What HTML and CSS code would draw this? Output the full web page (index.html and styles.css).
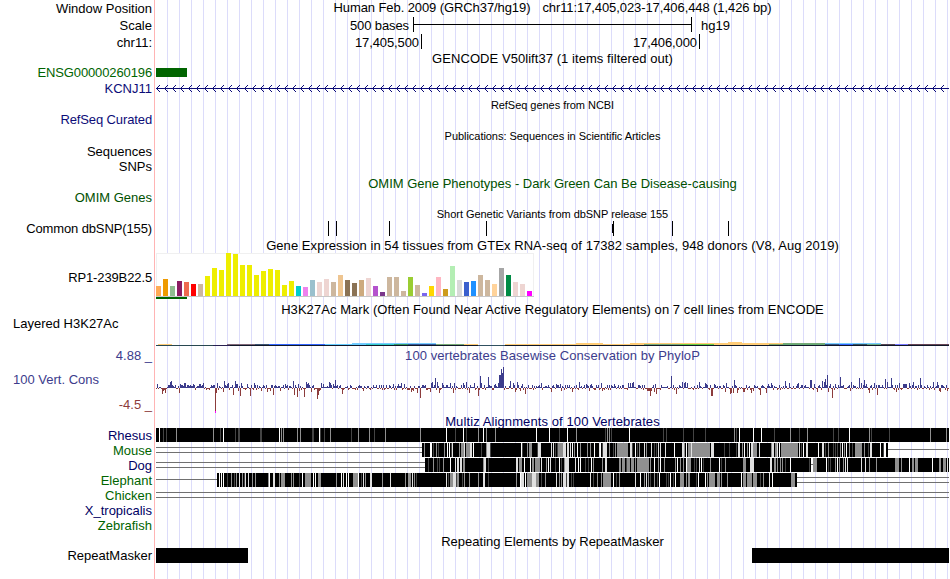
FILE: index.html
```html
<!DOCTYPE html>
<html lang="en">
<head>
    <meta charset="UTF-8">
    <meta name="viewport" content="width=device-width, initial-scale=1.0">
    <title>Human chr11:17,405,023-17,406,448</title>
    <link rel="stylesheet" href="styles.css">
</head>
<body>

    <main class="browser">
        <!-- Position and ruler -->
        <div class="row h17">
            <span class="label">Window Position</span>
            <div class="caption position"><span>Human Feb. 2009 (GRCh37/hg19)</span><span>chr11:17,405,023-17,406,448 (1,426 bp)</span></div>
        </div>
        <div class="row h17">
            <span class="label">Scale</span>
            <div class="scale">
                <span class="scale-size">500 bases</span>
                <span class="scale-bar"></span>
                <span class="scale-db">hg19</span>
            </div>
        </div>
        <div class="row h17">
            <span class="label">chr11:</span>
            <div class="ruler">
                <span class="ruler-mark first">17,405,500</span>
                <span class="ruler-mark">17,406,000</span>
            </div>
        </div>

        <!-- Genes -->
        <div class="row h15"><div class="caption wide">GENCODE V50lift37 (1 items filtered out)</div></div>
        <div class="row h14">
            <span class="label green tight">ENSG00000260196</span>
            <svg class="data" id="ensg" width="793" height="14"><rect x="0" y="2" width="31" height="9" fill="#006400"/></svg>
        </div>
        <div class="row h17">
            <span class="label navy">KCNJ11</span>
            <svg class="data" id="kcnj11" width="793" height="17"></svg>
        </div>
        <div class="row h15"><div class="caption small low">RefSeq genes from NCBI</div></div>
        <div class="row h15"><span class="label navy tight">RefSeq Curated</span></div>
        <div class="row h17"><div class="caption small low">Publications: Sequences in Scientific Articles</div></div>
        <div class="row h15"><span class="label">Sequences</span></div>
        <div class="row h16"><span class="label">SNPs</span></div>
        <div class="row h16"><div class="caption low omim">OMIM Gene Phenotypes - Dark Green Can Be Disease-causing</div></div>
        <div class="row h14"><span class="label omim">OMIM Genes</span></div>

        <!-- Variants -->
        <div class="row h16"><div class="caption small low">Short Genetic Variants from dbSNP release 155</div></div>
        <div class="row h16">
            <span class="label tight">Common dbSNP(155)</span>
            <svg class="data" id="snps" width="793" height="16"></svg>
        </div>

        <!-- Expression -->
        <div class="row h16"><div class="caption low wide">Gene Expression in 54 tissues from GTEx RNA-seq of 17382 samples, 948 donors (V8, Aug 2019)</div></div>
        <div class="row gtex-row">
            <span class="label tight">RP1-239B22.5</span>
            <svg class="data" id="gtex" width="793" height="48"></svg>
        </div>

        <!-- Regulation -->
        <div class="row h16"><div class="caption low wide">H3K27Ac Mark (Often Found Near Active Regulatory Elements) on 7 cell lines from ENCODE</div></div>
        <div class="row layered-row">
            <span class="label left">Layered H3K27Ac</span>
            <svg class="data" id="layered" width="793" height="31"></svg>
        </div>

        <!-- Conservation -->
        <div class="row h15">
            <span class="label cons">4.88 _</span>
            <div class="caption cons wide">100 vertebrates Basewise Conservation by PhyloP</div>
        </div>
        <div class="row cons-row">
            <div class="cons-labels">
                <span class="label left cons">100 Vert. Cons</span>
                <span class="label cons-min">-4.5 _</span>
            </div>
            <svg class="data" id="phylop" width="793" height="50"></svg>
        </div>
        <div class="row h15"><div class="caption low wider multiz">Multiz Alignments of 100 Vertebrates</div></div>
        <div class="row h15"><span class="label multiz">Rhesus</span><svg class="data" id="rhesus" width="793" height="15"></svg></div>
        <div class="row h15"><span class="label green">Mouse</span><svg class="data" id="mouse" width="793" height="15"></svg></div>
        <div class="row h15"><span class="label multiz">Dog</span><svg class="data" id="dog" width="793" height="15"></svg></div>
        <div class="row h15"><span class="label green">Elephant</span><svg class="data" id="elephant" width="793" height="15"></svg></div>
        <div class="row h15"><span class="label green">Chicken</span><svg class="data" id="chicken" width="793" height="15"></svg></div>
        <div class="row h15"><span class="label multiz">X_tropicalis</span></div>
        <div class="row h15"><span class="label green">Zebrafish</span></div>

        <!-- Repeats -->
        <div class="row h15"><div class="caption low">Repeating Elements by RepeatMasker</div></div>
        <div class="row h15">
            <span class="label">RepeatMasker</span>
            <svg class="data" id="repeats" width="793" height="15"><rect width="92" height="15"/><rect x="596" width="197" height="15"/></svg>
        </div>
    </main>

    <script src="tracks.js"></script>
</body>
</html>
```

FILE: styles.css
```css
body {
    margin: 0;
    background: #fff;
    font-family: "Liberation Sans", Arial, Helvetica, sans-serif;
    font-size: 13px;
    color: #000;
}

/* Guide lines every 12px, red line between labels and data */
.browser {
    width: 949px;
    height: 579px;
    overflow: hidden;
    background:
        linear-gradient(#ffb4b4, #ffb4b4) 154px 0 / 1px 100% no-repeat,
        repeating-linear-gradient(to right, #dcdcfa 0, #dcdcfa 1px, transparent 1px, transparent 12px) 167px 0 / 782px 100% no-repeat;
}

.row {
    display: grid;
    grid-template-columns: 152px 793px;
    column-gap: 4px;
    white-space: nowrap;
}

.h14 { height: 14px; line-height: 14px; }
.h15 { height: 15px; line-height: 15px; }
.h16 { height: 16px; line-height: 16px; }
.h17 { height: 17px; line-height: 17px; }

.label {
    text-align: right;
}

.label.left {
    text-align: left;
    padding-left: 13px;
}

.caption {
    grid-column: 2;
    text-align: center;
}

.small {
    font-size: 11px;
    letter-spacing: -0.04px;
}

.low {
    padding-top: 1px;
}

.tight { letter-spacing: -0.12px; }
.wide { letter-spacing: 0.06px; }
.wider { letter-spacing: 0.1px; }

.position {
    display: flex;
    justify-content: center;
    gap: 12px;
    line-height: 15px;
    letter-spacing: -0.09px;
}

.data {
    display: block;
    grid-column: 2;
    overflow: visible;
    shape-rendering: crispEdges;
}

/* Track colors */
.green { color: #006400; }
.navy { color: #0c0c78; }
.omim { color: #005000; }
.cons { color: #3c3c8c; }
.cons-min { color: #8c3c3c; }
.multiz { color: #000064; }

/* Scale bar */
.scale {
    display: flex;
    align-items: center;
}

.scale-size {
    width: 253px;
    text-align: right;
    margin-right: 4px;
    letter-spacing: -0.1px;
}

.scale-bar {
    width: 277px;
    height: 15px;
    margin-right: 9px;
    border-left: 1px solid #000;
    border-right: 1px solid #000;
    background: linear-gradient(#000, #000) 0 7px / 100% 1px no-repeat;
    margin-bottom: 2px;
}

/* Ruler */
.ruler {
    display: flex;
    align-items: flex-start;
}

.ruler-mark {
    width: 275px;
    height: 15px;
    padding-right: 2px;
    border-right: 1px solid #000;
    text-align: right;
    line-height: 17px;
    letter-spacing: -0.1px;
}

.ruler-mark.first {
    width: 263px;
}

.gtex-row {
    height: 48px;
    line-height: 49px;
}

.layered-row {
    height: 31px;
    line-height: 14px;
}

/* Conservation */
.cons-row {
    height: 50px;
    line-height: 15px;
}

.cons-labels {
    display: flex;
    flex-direction: column;
    gap: 10px;
    padding-top: 9px;
}
```

FILE: tracks.js
```js
const SVG_NS = "http://www.w3.org/2000/svg";
const LEFT = 156; // x of the first data pixel
const RIGHT = 949;

function rect(svg, x, y, w, h, fill) {
    const r = document.createElementNS(SVG_NS, "rect");
    r.setAttribute("x", x);
    r.setAttribute("y", y);
    r.setAttribute("width", w);
    r.setAttribute("height", h);
    r.setAttribute("fill", fill);
    svg.appendChild(r);
}

function makeRandom(seed) {
    return () => {
        seed = (seed * 1103515245 + 12345) % 2147483648;
        return seed / 2147483648;
    };
}

// "x:height x:height" to an object
function parsePairs(text) {
    const out = {};
    text.trim().split(/\s+/).forEach((p) => {
        const [x, h] = p.split(":").map(Number);
        out[x] = h;
    });
    return out;
}

// KCNJ11 intron line with strand arrows
const gene = document.getElementById("kcnj11");
rect(gene, 0, 8, 793, 1, "#0c0c78");
for (let x = 0; x < 790; x += 8) {
    for (let i = 1; i < 4; i++) {
        rect(gene, x + i, 8 - i, 1, 1, "#0c0c78");
        rect(gene, x + i, 8 + i, 1, 1, "#0c0c78");
    }
}

// Common SNPs
const snps = document.getElementById("snps");
[328, 336, 389, 486, 613, 672, 728].forEach((x) => rect(snps, x - LEFT, 0, 1, 15, "#000"));
rect(snps, 612 - LEFT, 3, 1, 9, "#000");

// GTEx bars: height, color
const tissues = [
    [10, "#ffaa55"], [17, "#ee9a00"], [10, "#8fbc8f"], [15, "#8b1c62"], [14, "#ee6a50"], [12, "#ff0000"],
    [12, "#cdb79e"], [20, "#eeee00"], [28, "#eeee00"], [26, "#eeee00"], [43, "#eeee00"], [42, "#eeee00"],
    [31, "#eeee00"], [31, "#eeee00"], [21, "#eeee00"], [25, "#eeee00"], [27, "#eeee00"], [26, "#eeee00"],
    [11, "#eeee00"], [15, "#eeee00"], [10, "#00cdcd"], [9, "#ee82ee"], [16, "#9ac0cd"], [14, "#eed5d2"],
    [17, "#eed5d2"], [14, "#cdb79e"], [21, "#eec591"], [16, "#8b7355"], [13, "#8b7355"], [16, "#cdaa7d"],
    [18, "#eed5d2"], [10, "#b452cd"], [4, "#7a378b"], [19, "#cdb79e"], [19, "#cdb79e"], [5, "#cdb79e"],
    [19, "#9acd32"], [11, "#cdb79e"], [3, "#7a67ee"], [10, "#ffd700"], [19, "#ffb6c1"], [7, "#cd9b1d"],
    [30, "#b4eeb4"], [16, "#d9d9d9"], [14, "#3a5fcd"], [15, "#1e90ff"], [21, "#cdb79e"], [16, "#cdb79e"],
    [12, "#ffd39b"], [28, "#a6a6a6"], [21, "#008b45"], [14, "#eed5d2"], [12, "#eed5d2"], [5, "#ff00ff"]
];
const gtex = document.getElementById("gtex");
rect(gtex, 0, 0, 378, 44, "#f0f0f0");
rect(gtex, 1, 1, 376, 42, "#fff");
rect(gtex, 0, 43, 378, 1, "#c8c8c8");
tissues.forEach(([h, color], i) => rect(gtex, i * 7, 43 - h, 5, h, color));
rect(gtex, 0, 44, 31, 2, "#006400");

// Layered H3K27Ac: x from, x to, y, color
const layered = document.getElementById("layered");
rect(layered, 0, 28, 793, 1, "#101828");
[
    [156, 213, 28, "#284850"], [213, 230, 28, "#282050"], [478, 505, 28, "#305060"],
    [158, 172, 27, "#ffcc77"], [227, 255, 27, "#806878"], [255, 269, 27, "#3d5472"],
    [269, 325, 27, "#3366ff"], [325, 366, 27, "#66ccff"], [352, 436, 26, "#77ccff"],
    [366, 394, 27, "#33cccc"], [394, 408, 27, "#339966"], [408, 436, 27, "#335599"],
    [436, 464, 27, "#77aa77"], [464, 478, 27, "#ffcc77"], [505, 644, 27, "#ffcc77"],
    [576, 603, 26, "#ffcc77"], [630, 783, 26, "#ffcc77"], [728, 742, 25, "#ffcc77"],
    [644, 680, 27, "#77aa77"], [680, 714, 27, "#66cc44"], [714, 769, 27, "#ffcc77"],
    [769, 783, 27, "#88aa66"], [783, 825, 26, "#77aa77"], [783, 825, 27, "#66aa77"],
    [825, 881, 26, "#77ccff"], [825, 839, 27, "#335588"], [839, 853, 27, "#3366ff"],
    [853, 867, 27, "#335566"], [867, 881, 27, "#66aa88"], [881, 895, 27, "#554455"],
    [895, 908, 27, "#7777ff"], [908, 949, 27, "#664455"]
].forEach(([a, b, y, c]) => rect(layered, a - LEFT, y, b - a, 1, c));

// PhyloP scores, pixels above and below the zero line
const up = parsePairs(`157:4 168:3 170:6 171:7 173:2 175:3 180:4 181:3 182:3 184:5 185:5 187:3 190:3 191:2 193:4 194:3
    199:4 200:4 201:2 203:5 217:5 219:2 224:7 225:3 227:4 228:5 232:3 235:7 236:4 237:4 241:5 242:2 247:4 251:3 254:5
    257:3 263:3 264:2 271:3 275:3 278:2 283:3 285:4 287:3 290:2 293:7 295:3 298:4 300:2 306:6 307:4 308:5 309:3 313:3
    321:5 323:4 329:6 330:5 331:3 333:4 335:8 337:3 339:2 347:2 359:3 376:3 381:3 386:3 393:4 398:4 401:5 404:4
    431:5 432:6 435:10 437:6 442:5 443:3 446:3 447:3 450:5 454:5 456:2 463:5 466:6 470:3 474:5 480:12 481:5 484:3
    488:11 489:3 494:3 495:4 498:5 499:13 500:13 501:19 502:15 503:21 510:7 513:5 517:6 522:4 532:3 541:5 556:4 557:3
    560:4 565:3 579:6 586:4 588:2 591:4 596:3 601:5 609:3 611:3 614:4 622:3 628:5 630:5 632:5 633:6 638:3 655:4 661:3
    667:2 671:12 679:3 682:6 684:5 685:6 687:5 699:6 705:5 706:4 714:4 723:3 726:5 734:8 735:3 768:4 771:5 779:3 785:7
    789:5 797:4 798:5 802:3 810:8 811:8 814:4 822:7 824:6 825:9 827:13 830:4 835:4 840:11 843:3 851:6 859:10 861:5
    864:8 866:4 874:5 878:3 885:9 887:6 891:10 895:3 899:5 903:4 904:4 905:4 906:4 909:5 913:6 920:10 921:3 933:6
    937:6 942:3`);
const down = parsePairs(`162:6 163:3 164:2 165:5 179:5 195:2 215:24 216:5 223:4 233:7 238:3 240:8 245:2 250:8 256:2 261:3
    267:4 270:3 273:7 280:3 294:7 297:9 299:3 304:9 311:4 317:11 318:7 319:3 342:6 355:2 363:3 408:2 411:4 413:3 417:5
    420:10 430:4 439:5 453:5 469:5 478:8 492:2 515:4 520:3 525:6 551:4 561:3 572:4 578:2 589:3 602:3 610:2
    627:2 647:3 648:3 649:3 650:8 651:3 654:4 656:6 676:6 693:2 711:8 712:8 725:4 730:6 731:5 733:5 737:5 743:4
    744:4 751:5 753:3 760:7 766:5 813:2 817:4 828:4 832:10 850:3 869:5 877:7 896:4 939:3 940:4 945:2 947:3`);
const phylop = document.getElementById("phylop");
const noise = makeRandom(11);
for (let x = LEFT; x < RIGHT; x++) {
    const px = x - LEFT;
    const r = noise();
    if (up[x]) {
        rect(phylop, px, 25 - up[x], 1, up[x], "#3c3c8c");
    } else if (down[x]) {
        rect(phylop, px, 25, 1, down[x], "#8c3c3c");
    } else if (r < 0.55) {
        const h = r < 0.12 ? 3 : r < 0.3 ? 2 : 1;
        rect(phylop, px, 25 - h, 1, h, "#3c3c8c");
    } else {
        rect(phylop, px, 25, 1, r > 0.87 ? 2 : 1, "#8c3c3c");
    }
}
rect(phylop, 215 - LEFT, 48, 1, 2, "#ff00ff");

// Alignments. d/g/l/w are shades from dark to white
const shades = { k: "#000", d: "#444", g: "#909090", l: "#e0e0e0", w: "#fff" };

function line(svg, from, to, ys) {
    ys.forEach((y) => rect(svg, from - LEFT, y, to - from, 1, "#707070"));
}

// stripes: "x,width,shade"; density adds the thin stripes between them
function alignment(svg, from, to, stripes, density, seed) {
    rect(svg, from - LEFT, 0, to - from, 14, "#000");
    const random = makeRandom(seed);
    for (let x = from + 1; x < to - 1; x += 1) {
        if (random() < density) {
            const keys = "ddggglww";
            rect(svg, x - LEFT, 0, 1, 14, shades[keys[Math.floor(random() * 8)]]);
            x++;
        }
    }
    stripes.trim().split(/\s+/).forEach((s) => {
        const [x, w, shade] = s.split(",");
        rect(svg, x - LEFT, 0, w, 14, shades[shade]);
    });
}

alignment(document.getElementById("rhesus"), 156, 949, `159,1,w 163,1,d 166,1,d 176,1,g 213,1,g 220,1,d 223,1,w 235,1,d
    238,2,d 260,2,d 279,1,w 281,1,g 283,1,g 297,1,g 300,1,g 312,2,d 319,1,w 320,1,d 324,1,d 330,1,g 351,1,d 358,1,g
    369,1,g 374,1,d 385,1,g 420,1,g 446,1,w 455,1,d 463,1,w 466,1,d 478,1,g 483,1,w 486,1,g 495,1,g 536,1,w 549,1,w
    559,1,d 567,1,w 576,1,g 605,1,d 607,1,g 609,1,g 611,1,d 629,1,w 663,1,d 666,1,d 683,1,d 693,1,d 705,1,d 734,1,g
    736,1,d 739,1,w 753,1,w 761,1,w 774,1,d 790,1,g 799,1,d 807,1,g 833,1,d 838,1,d 849,1,w 869,1,g 871,1,d 889,1,d
    930,1,g 946,1,g`, 0, 1);

const mouse = document.getElementById("mouse");
line(mouse, 156, 422, [4, 9]);
line(mouse, 888, 949, [6]);
alignment(mouse, 422, 888, `430,1,w 452,1,l 461,3,g 464,1,l 466,3,g 470,2,l 487,3,l 491,15,k 511,10,k 521,1,w 529,3,g
    538,3,l 553,1,l 558,4,g 563,3,l 567,2,l 599,1,l 603,4,l 617,11,g 630,2,l 644,1,l 660,1,l 683,1,l 688,3,g 691,1,l
    692,18,g 711,3,l 738,2,l 751,2,l 753,4,g 772,2,l 775,2,g 781,17,g 806,2,l 809,9,k 822,2,l 855,7,g 870,2,l 884,1,w`, 0.35, 7);

const dog = document.getElementById("dog");
line(dog, 156, 425, [4, 9]);
line(dog, 811, 813, [6]);
alignment(dog, 425, 811, `457,2,l 460,2,l 463,2,g 466,16,k 484,2,l 490,24,k 516,2,l 519,2,g 532,2,g 535,5,g 565,4,l 605,2,l
    608,11,k 619,2,g 623,2,g 627,3,g 632,2,g 637,12,g 687,3,g 726,16,k 743,3,g 750,4,l 756,11,k 770,2,l 774,2,g 791,17,k`, 0.33, 23);
alignment(dog, 813, 949, "813,4,g 850,10,k 879,15,k 895,3,g 909,1,w 912,2,g 915,3,g 919,7,k 939,2,g 943,3,g", 0.26, 31);

const elephant = document.getElementById("elephant");
line(elephant, 156, 217, [6]);
line(elephant, 797, 949, [4, 9]);
alignment(elephant, 217, 797, `223,1,w 239,1,l 242,1,g 245,1,l 248,1,l 252,1,g 263,5,k 269,1,w 273,2,l 281,4,g 305,6,g 318,3,g
    321,14,k 353,5,g 363,1,l 370,2,l 373,6,k 392,11,k 408,3,g 412,1,l 428,17,k 450,3,g 453,3,l 457,2,g 483,2,l
    491,22,k 521,3,l 528,4,g 532,4,l 536,3,g 563,3,l 567,2,l 576,11,k 603,8,g 622,13,k 680,3,g 688,2,g 710,5,g 717,3,g
    729,9,k 743,3,g 747,5,g 753,3,g 777,11,k 791,4,g`, 0.35, 5);

line(document.getElementById("chicken"), 156, 949, [4, 9]);
```
